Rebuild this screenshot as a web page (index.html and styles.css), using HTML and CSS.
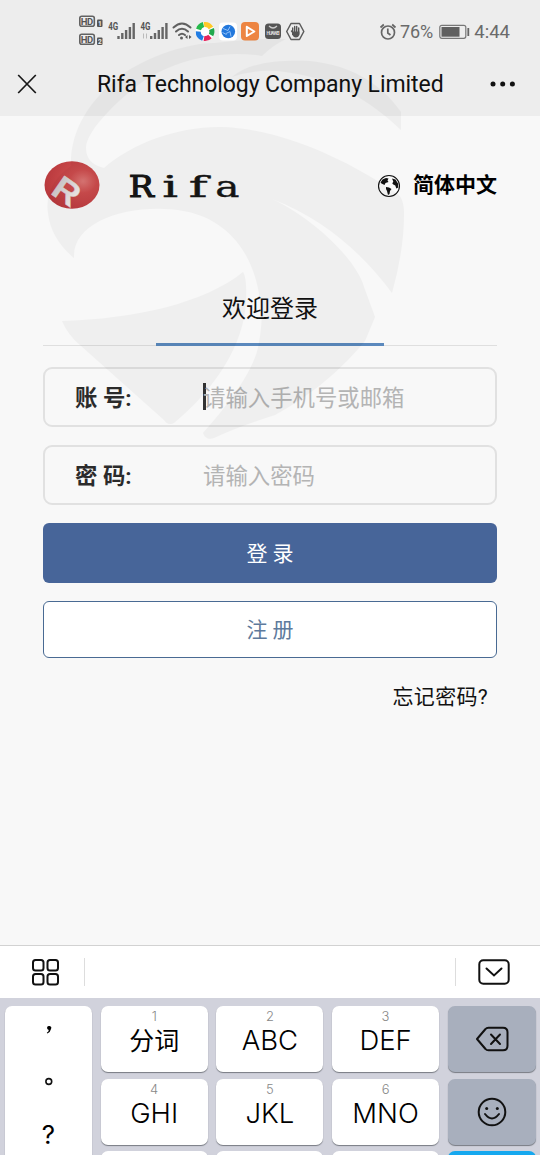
FILE: index.html
```html
<!DOCTYPE html>
<html lang="zh-CN">
<head>
<meta charset="utf-8">
<title>Rifa Technology Company Limited</title>
<link rel="stylesheet" href="styles.css">
</head>
<body>
<div class="phone">
  <header class="top">
    <div class="status">
      <svg class="status-icons" width="230" height="38" viewBox="78 12.500 230 38">
        <g fill="none" stroke="#626262" stroke-width="1.600">
          <rect x="79.800" y="16.800" width="14.500" height="10" rx="2"/><rect x="79.800" y="34.800" width="14.500" height="10" rx="2"/>
        </g>
        <g fill="#555" font-family="Roboto, sans-serif" font-weight="700">
          <text x="80.800" y="25.300" font-size="9.500" textLength="12.500">HD</text><text x="80.800" y="43.300" font-size="9.500" textLength="12.500">HD</text>
          <rect x="97" y="20" width="5.500" height="7.500" rx="1"/><rect x="97" y="38" width="5.500" height="7.500" rx="1"/>
          <text x="108.300" y="30.500" font-size="10.500" textLength="10" lengthAdjust="spacingAndGlyphs">4G</text>
          <text x="140.500" y="30.500" font-size="10.500" textLength="10" lengthAdjust="spacingAndGlyphs">4G</text>
        </g>
        <g fill="#eee" font-family="Roboto, sans-serif" font-size="6.500" font-weight="700"><text x="98" y="26.200">1</text><text x="98" y="44.200">2</text></g>
        <g stroke="#666" stroke-width="2.400" fill="none">
          <path d="M118.500 39.500v-3M122.300 39.500v-6M126.100 39.500v-9M129.900 39.500v-12M133.700 39.500v-16"/>
          <path d="M151.200 39.500v-3M155 39.500v-6M158.800 39.500v-9M162.600 39.500v-12M166.400 39.500v-16"/>
        </g>
        <path d="M143.500 39v-5M146.500 34v5" stroke="#bbb" fill="none"/>
        <g fill="none" stroke="#606060" stroke-width="2" stroke-linecap="round">
          <path d="M173.500 28Q182 20 190.500 28M176 32q6-5.500 12 0M179 35.500q3-2.500 6 0"/>
        </g>
        <circle cx="181.500" cy="38.500" r="1.500" fill="#606060"/><path d="M187.500 35.500v4l-2.500-2zM189 35.500v4l2.500-2z" fill="#555"/>
        <circle cx="205" cy="32" r="9.500" fill="#fff"/>
        <g fill="none" stroke-width="5">
          <path d="M198.500 30a7 7 0 0 1 5-5" stroke="#27b94c"/><path d="M204 25a7 7 0 0 1 7 3.500" stroke="#ffc927"/>
          <path d="M211.500 29.500a7 7 0 0 1-.5 6" stroke="#21a84d"/><path d="M210 37a7 7 0 0 1-6 2" stroke="#e5265c"/><path d="M203 39a7 7 0 0 1-4.700-7" stroke="#227de3"/>
        </g>
        <rect x="219" y="23" width="18" height="18" rx="4" fill="#fff"/><circle cx="228.300" cy="32" r="6.800" fill="#2378dc"/>
        <path d="M223 29l5 2 2-4M226 34l4-2 1 5M222.500 33l4 2" fill="none" stroke="#9cc7fa" stroke-width=".9"/>
        <rect x="241" y="22.500" width="18" height="18.500" rx="4" fill="#ed8542"/><path d="M246.800 27.300l7.500 4.700-7.500 4.500z" fill="#ed8542" stroke="#fff" stroke-width="2" stroke-linejoin="round"/>
        <rect x="265" y="24" width="16" height="15.500" rx="3.500" fill="#555"/><path d="M269 26.500q4 4 8 0" fill="none" stroke="#ccc" stroke-width="1.200"/>
        <text x="266.500" y="35.500" fill="#ddd" font-size="4.500" font-family="Roboto, sans-serif" font-weight="700" textLength="13">HUAWEI</text>
        <path d="M291 24h8.500l4.300 8-4.300 8H291l-4.300-8z" fill="none" stroke="#5c5c5c" stroke-width="1.500" stroke-linejoin="round"/>
        <path d="M291.500 31.500l2.500 3M292.700 28.500v5M294.700 27v6M296.700 27v6M298.700 28.500v6" stroke="#555" stroke-width="1.400" stroke-linecap="round"/><path d="M292 32h7.400v3.500q-1 2.500-3.500 2.500t-3.900-3z" fill="#555"/>
      </svg>
      <div class="status-right">
        <svg width="18" height="20" viewBox="0 0 18 20"><g fill="none" stroke="#666" stroke-width="1.700"><circle cx="9" cy="10.500" r="6.500"/><path d="M8.800 6.500v4.500l2.700 2M1.500 5.500l3.300-3M16.500 5.500l-3.300-3" /></g></svg>
        <span class="pct">76%</span>
        <svg class="battery" width="31" height="16" viewBox="0 0 31 16"><rect x=".8" y="1.300" width="26" height="13" rx="2" fill="none" stroke="#777" stroke-width="1.200"/><rect x="2.500" y="3" width="18" height="9.700" fill="#606060"/><path d="M29.300 4v8" stroke="#666" stroke-width="1.800"/></svg>
        <span>4:44</span>
      </div>
    </div>
    <nav class="nav">
      <svg width="20" height="20" viewBox="0 0 20 20"><path d="M1.200 1l17.600 18M18.800 1L1.200 19" stroke="#181818" stroke-width="1.700"/></svg>
      <h1>Rifa Technology Company Limited</h1>
      <svg width="26" height="6" viewBox="0 0 26 6" fill="#111"><circle cx="3" cy="3" r="2.500"/><circle cx="12.700" cy="3" r="2.500"/><circle cx="22.400" cy="3" r="2.500"/></svg>
    </nav>
  </header>
  <main class="page">
    <div class="brand">
      <svg class="logo" width="56" height="48" viewBox="0 0 56 48">
        <defs>
        <radialGradient id="red" cx=".7" cy=".42" r=".7"><stop offset="0" stop-color="#dc7775"/><stop offset=".35" stop-color="#cd4c4d"/><stop offset="1" stop-color="#b9393d"/></radialGradient>
        <linearGradient id="silver" x2="1"><stop offset="0" stop-color="#ccc8ca"/><stop offset="1" stop-color="#f6eeee"/></linearGradient></defs>
        <ellipse cx="28" cy="24" rx="27.500" ry="23.700" fill="url(#red)"/>
        <text transform="translate(5.500 32) rotate(35) scale(1.100 1)" fill="url(#silver)" stroke="#ddd7d7" stroke-width=".4" font-family="Liberation Sans, sans-serif" font-weight="700" font-size="33">R</text>
      </svg>
      <div class="wordmark"><span class="r">R</span><span class="i">i</span><span class="f">f</span><span class="a">a</span></div>
      <div class="lang">
        <svg width="24" height="24" viewBox="0 0 24 24"><circle cx="12" cy="12" r="10.500" fill="#fafafa" stroke="#111" stroke-width="1.100"/><path d="M3.500 8.500l2-3 3.500-1.500 2.500.5-1 2 1 1.500-3 1-1 2-2-1-1-.5zM15 4.500l3.500 1 2.500 4 .3 4-2 1-1-3-2-1-1-1 1-2zM9 13l3 .5 2.500 1.500-1.500 2-.5 3-1.500 1-1-4-1-2z" fill="#111"/></svg>
        <span>简体中文</span>
      </div>
    </div>
    <div class="tabs"><div class="tab">欢迎登录</div></div>
    <label class="field"><b>账 号:</b><span class="hint"><i class="caret"></i>请输入手机号或邮箱</span></label>
    <label class="field"><b>密 码:</b><span class="hint">请输入密码</span></label>
    <div class="btn login">登 录</div>
    <div class="btn register">注 册</div>
    <div class="forgot">忘记密码?</div>
  </main>
  <section class="keyboard">
    <div class="tools">
      <svg class="grid-icon" width="28" height="28" viewBox="0 0 28 28" fill="none" stroke="#111" stroke-width="2"><rect x="2" y="2" width="10.500" height="10.500" rx="2.500"/><rect x="16.500" y="2" width="10.500" height="10.500" rx="2.500"/><rect x="2" y="16" width="10.500" height="10.500" rx="2.500"/><rect x="16.500" y="16" width="10.500" height="10.500" rx="2.500"/></svg>
      <div class="candidates"></div>
      <svg class="hide-icon" width="32" height="26" viewBox="0 0 32 26" fill="none" stroke="#111" stroke-width="2"><rect x="1.300" y="1.300" width="29.400" height="23.400" rx="4"/><path d="M8.500 9.500l7.500 7 7.500-7" stroke-linecap="round"/></svg>
    </div>
    <div class="keys">
      <div class="key punct"><svg width="87" height="160" viewBox="0 0 87 160"><path d="M42 22a2.100 2.100 0 1 1 4 1q-.5 3-3.700 4.500l-.5-.8q2-1.200 2-2.700-1.500-.3-1.800-2z"/><circle cx="43.800" cy="75.500" r="2.900" fill="none" stroke="#111" stroke-width="1.600"/></svg><span>?</span></div>
      <div class="key"><small>1</small><span class="cn">分词</span></div>
      <div class="key"><small>2</small><span>ABC</span></div>
      <div class="key"><small>3</small><span>DEF</span></div>
      <div class="key fn"><svg width="34" height="26" viewBox="0 0 34 26" fill="none" stroke="#111" stroke-width="2" stroke-linejoin="round" stroke-linecap="round"><path d="M2 13L10.500 3q1-1.300 3-1.300H28q4.500 0 4.500 4.500v13.600q0 4.500-4.500 4.500H13.500q-2 0-3-1.300z"/><path d="M16 8.500l9 9.500M25 8.500L16 18"/></svg></div>
      <div class="key"><small>4</small><span>GHI</span></div>
      <div class="key"><small>5</small><span>JKL</span></div>
      <div class="key"><small>6</small><span>MNO</span></div>
      <div class="key fn"><svg width="30" height="30" viewBox="0 0 30 30" fill="none" stroke="#111" stroke-width="2"><circle cx="15" cy="15" r="13.300"/><path d="M8 17q7 9 14 0" stroke-linecap="round"/><circle cx="9.700" cy="11.500" r="1.500" fill="#111" stroke="none"/><circle cx="20.300" cy="11.500" r="1.500" fill="#111" stroke="none"/></svg></div>
      <div class="key"></div><div class="key"></div><div class="key"></div><div class="key go"></div>
    </div>
  </section>
  <svg class="watermark" width="540" height="460" viewBox="0 0 540 460">
    <path d="M71 166C70 130 90 100 120 76C150 54 195 42 215 43Q255 38 286 39Q273 45 262 56C215 48 165 64 138 85C110 107 86 133 86 148Q86 164 104 168C132 144 175 127 220 127C280 128 348 160 396 193Q404 197 404 214Q404 250 392 293C365 256 325 219 272 199C315 219 357 261 364 287L375 317L365 341C335 377 305 398 275 415Q237 427 214 438Q206 441 203 433C229 404 252 373 258 348C263 323 262 310 260 300C253 246 220 210 164 209C120 207 72 224 74 258Q51 239 48 213Q44 185 71 166Z"/>
    <path d="M232 77C250 62 278 60 310 61C350 65 381 83 401 112L401 130C370 100 330 77 285 72Q258 68 232 77Z"/>
    <path d="M62 321C135 319 205 303 243 272Q247 278 246 301C244 345 215 389 174 423Q168 426 164 420L80 345Q68 335 62 321Z"/>
  </svg>
</div>
</body>
</html>
```
FILE: styles.css
```css
* { box-sizing: border-box; }
body { margin: 0; font-family: Roboto, "Noto Sans CJK SC", sans-serif; color: #111; }
svg { display: block; flex: none; }
.phone { position: relative; width: 540px; height: 1155px; overflow: hidden; display: flex; flex-direction: column; background: #f8f8f8; }
.watermark { position: absolute; left: 0; top: 0; fill: #000; opacity: .032; pointer-events: none; }

.top { height: 116px; background: #ededed; }
.status { height: 62px; padding: 12px 30px 0 78px; display: flex; justify-content: space-between; align-items: flex-start; }
.status-right { display: flex; align-items: center; height: 38px; color: #6a6a6a; font-size: 18.5px; padding-top: 1px; }
.status-right .pct { margin-left: 3px; font-size: 18px; }
.battery { margin: 0 4px 0 6px; }
.nav { height: 44px; padding: 0 24px 0 17px; display: flex; align-items: center; }
.nav h1 { margin: 1px auto 0 60px; font-size: 23px; font-weight: 400; letter-spacing: -.06px; white-space: nowrap; }

.page { flex: 1; padding: 45px 43px 0; display: flex; flex-direction: column; }
.brand { height: 48px; display: flex; align-items: center; padding-left: 1px; }
.wordmark { display: flex; margin-left: 27px; padding-top: 3px; font: 400 29px/48px "DejaVu Serif", serif; color: #151515; -webkit-text-stroke: .4px #151515; }
.wordmark span { display: flex; justify-content: center; width: 28.5px; }
.wordmark .i { transform: scaleX(1.7); }
.wordmark .f { transform: scaleX(1.75); }
.wordmark .a { transform: scaleX(1.4); }
.wordmark .r { transform: scaleX(1.15); -webkit-text-stroke-width: 1.1px; }
.lang { margin-left: auto; display: flex; align-items: center; gap: 12px; font-size: 21px; font-weight: 700; line-height: 48px; color: #000; }
.lang svg { margin-top: 1px; }
.tabs { height: 137px; border-bottom: 1px solid #dfdfdf; display: flex; justify-content: center; align-items: flex-end; }
.tab { width: 228px; height: 74px; line-height: 75px; font-size: 24px; text-align: center; border-bottom: 3px solid #5b89bd; margin-bottom: -1px; }
.field { height: 60px; margin-top: 18px; border: 2px solid #e1e1e1; border-radius: 9px; display: flex; align-items: center; padding: 0 0 2px 30px; font-size: 22.4px; color: #2b2b2b; }
.tabs + .field { margin-top: 20.5px; }
.field b { width: 128px; }
.hint { display: flex; align-items: center; color: #b4b4b4; }
.caret { width: 3px; height: 27px; margin: 2px -3px 0 0; background: #333; }
.btn { display: flex; align-items: center; justify-content: center; margin-top: 18px; border-radius: 6px; font-size: 21px; }
.login { height: 60px; padding-bottom: 2px; background: #476599; color: #fff; }
.register { height: 57px; padding-bottom: 3px; background: #fff; border: 1.5px solid #496a93; color: #5e7a9c; }
.forgot { align-self: flex-end; margin: 23px 9px 0 0; font-size: 21px; line-height: 32px; letter-spacing: .3px; }

.keyboard { height: 210px; background: #d1d2dc; border-top: 1px solid #d2d2d2; }
.tools { height: 52px; background: #fff; display: flex; align-items: center; padding: 0 30px 0 31px; }
.candidates { flex: 1; height: 28px; margin: 0 22px 0 25px; border: 1px solid #ddd; border-width: 0 1px; }
.keys { height: 157px; overflow: hidden; padding: 8px 4px 0 5px; display: grid; grid-template-columns: 87px 107px 107px 107px 88px; grid-auto-rows: 66px; column-gap: 8.7px; row-gap: 6.5px; font-family: Inter, "Noto Sans CJK SC", sans-serif; }
.key { background: #fff; border-radius: 7px; box-shadow: 0 1px 1px #777a82; display: flex; flex-direction: column; align-items: center; }
.key small { font-size: 13px; line-height: 16px; margin-top: 2px; color: #888; font-weight: 300; }
.key span { font-size: 27.5px; line-height: 33px; font-weight: 300; color: #000; }
.key .cn { font-size: 25px; line-height: 35px; font-weight: 400; }
.punct { grid-row: span 3; }
.punct svg { margin-bottom: -48px; }
.punct span { font-weight: 400; font-size: 26px; }
.key.fn { background: #a8afbd; justify-content: center; }
.key.go { background: #16a8ef; }
```
